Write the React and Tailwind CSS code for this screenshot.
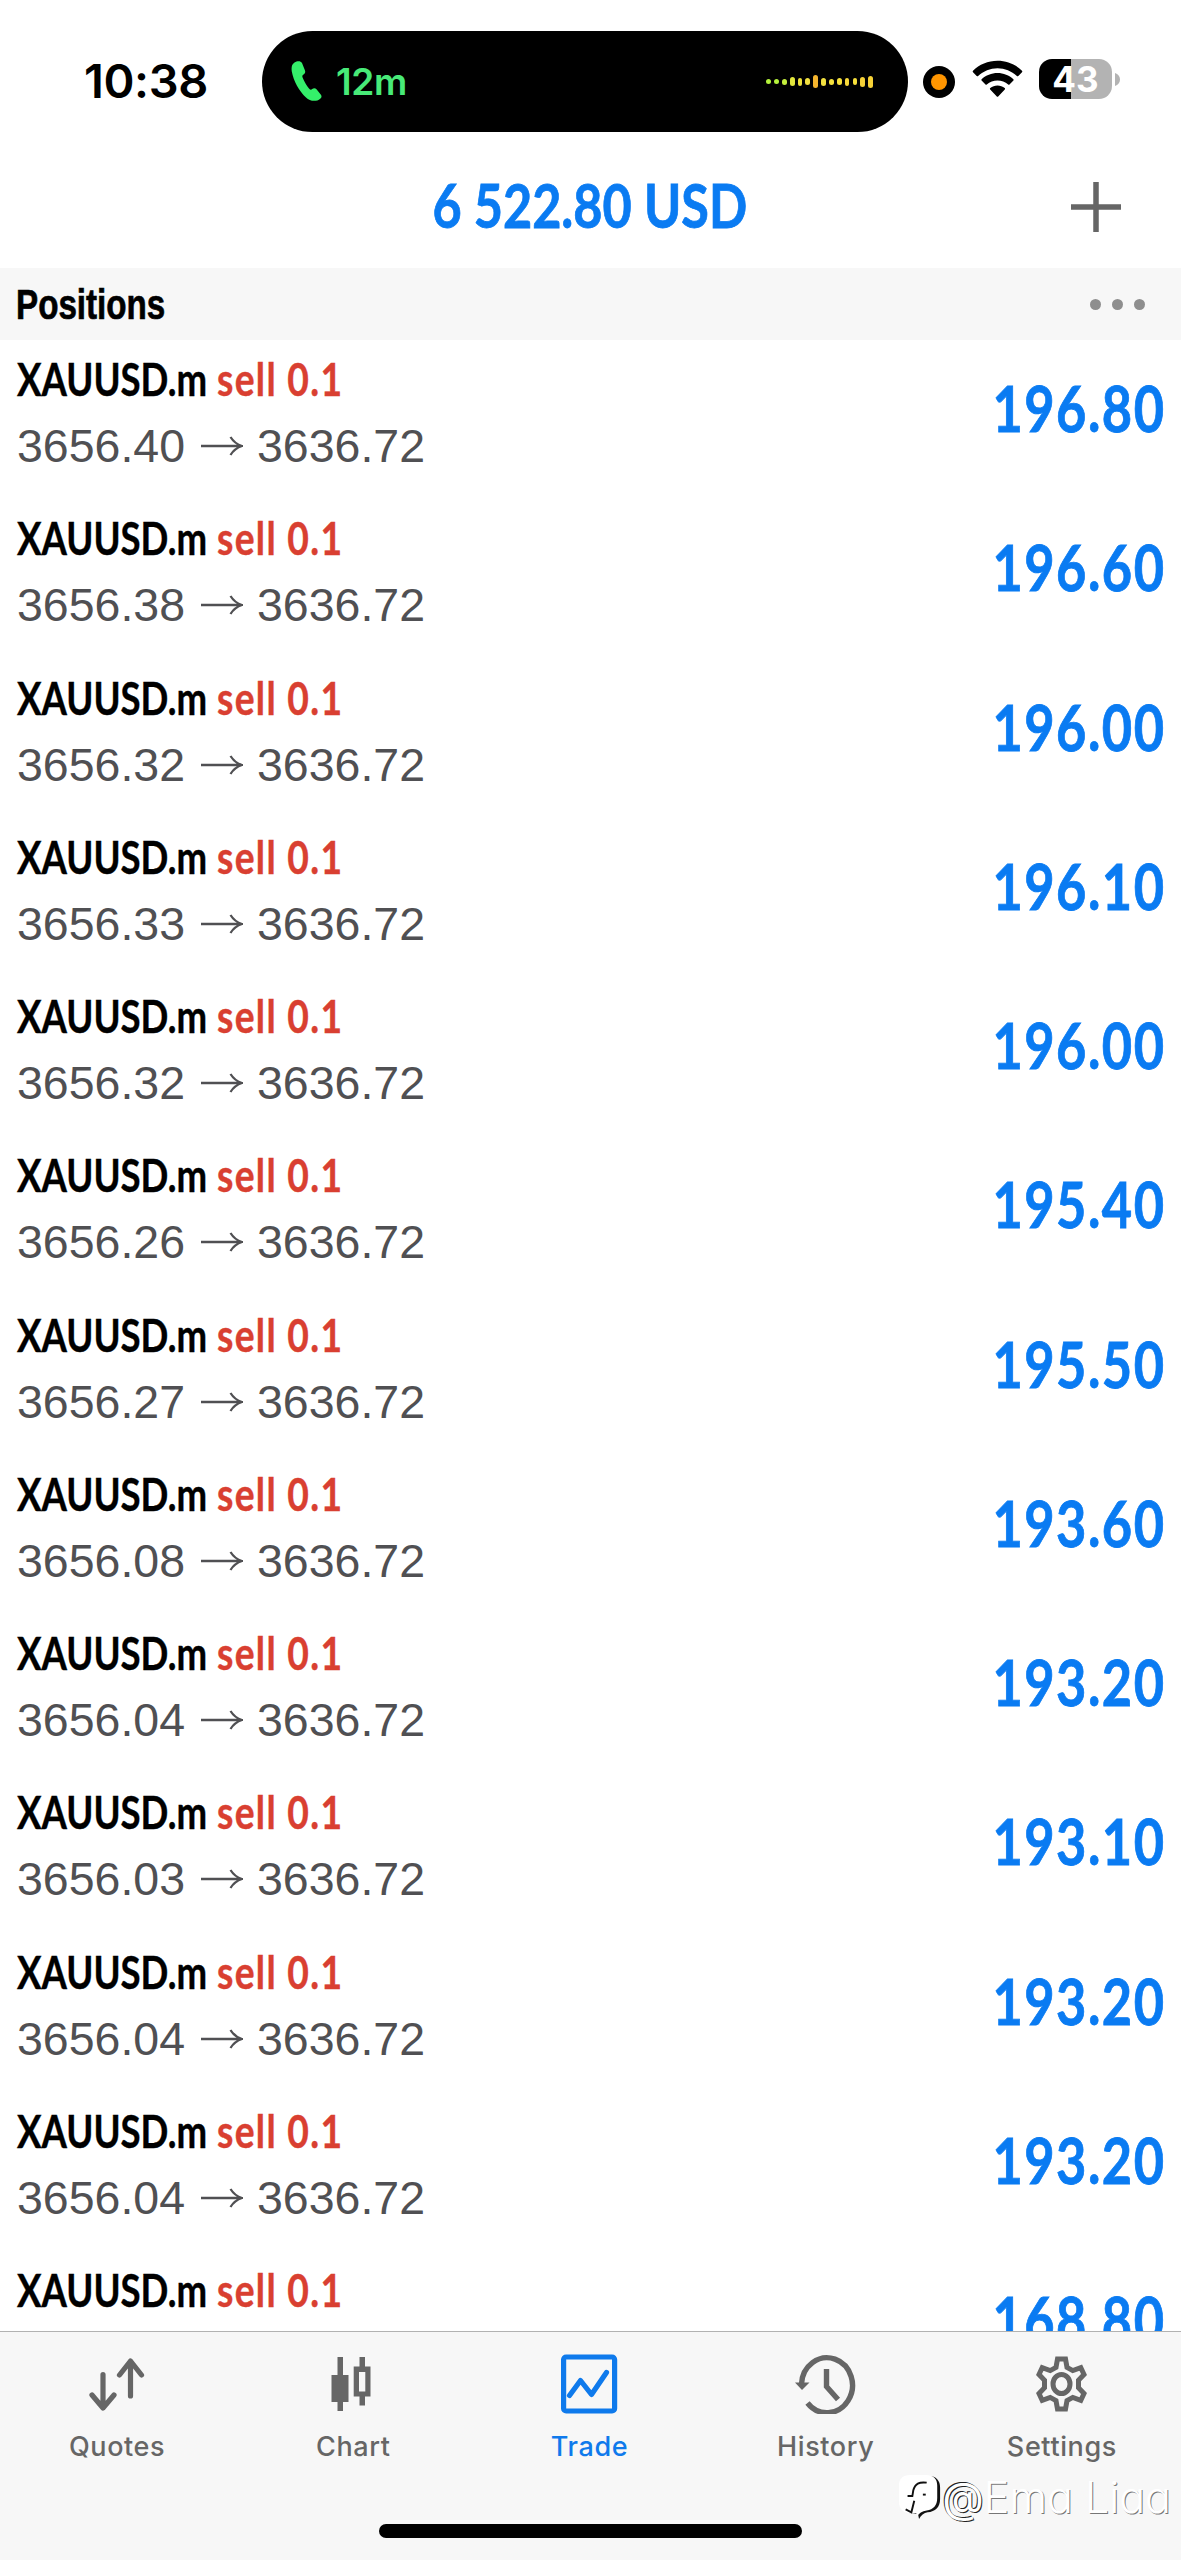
import React from "react";

const positions = [
  ["3656.40", "196.80"],
  ["3656.38", "196.60"],
  ["3656.32", "196.00"],
  ["3656.33", "196.10"],
  ["3656.32", "196.00"],
  ["3656.26", "195.40"],
  ["3656.27", "195.50"],
  ["3656.08", "193.60"],
  ["3656.04", "193.20"],
  ["3656.03", "193.10"],
  ["3656.04", "193.20"],
  ["3656.04", "193.20"],
  [null, "168.80"],
];

const bars = [
  [5, "#b5f23c"], [5, "#b5f23c"], [6, "#c4ee3c"], [9, "#e2e63c"], [8, "#eee23c"],
  [7, "#f2e040"], [13, "#f5b52e"], [8, "#f2e040"], [6, "#f5e23c"], [7, "#f5e03c"],
  [8, "#f7d83a"], [7, "#f7e03a"], [10, "#f5d037"], [12, "#f7d237"],
];

function StatusBar() {
  return (
    <div className="flex h-[163px] items-start">
      <div className="mt-[56px] w-[262px] pl-[84px] font-['Inter'] text-[47px] leading-[50px] font-semibold tracking-[-0.4px]">
        <span>10:38</span>
      </div>
      <div className="mt-[31px] flex h-[101px] w-[646px] items-center rounded-[51px] bg-black">
        <svg className="ml-[29px] h-[41px] w-[31px]" viewBox="0 0 31 41" preserveAspectRatio="none">
          <path d="M3.5 1.5C6 0 9.5-.5 11 2l3 7.500c.6 1.800-.1 3.200-1.500 4-1.200.6-1.500 1.600-.8 3.300 1.500 3.900 3.600 7.500 6.300 10.700 1.300 1.400 2.200 1.500 3.200.5 1.300-1.200 3.200-1.100 4.300.2l4.200 5.300c1.300 1.700 1 3.100-.5 4.200C25.500 41 19 40.500 15 36.500 8.200 30 2.500 20 .8 10.500.2 6.500.8 3.200 3.500 1.500z" fill="#34f06a" />
        </svg>
        <span className="ml-[14px] font-['Inter'] text-[37px] font-semibold tracking-[-0.3px] text-[#48ea78]">12m</span>
        <div className="mr-[35px] ml-auto flex items-center gap-[3.050px]">
          {bars.map(([h, c], i) => (
            <span key={i} className="w-[4.800px] rounded-full" style={{ height: h, background: c }} />
          ))}
        </div>
      </div>
      <div className="mt-[66px] ml-[15px] flex size-[32px] items-center justify-center rounded-full bg-black">
        <div className="size-[16px] rounded-full bg-[#ff9500]" />
      </div>
      <svg className="mt-[60px] ml-[17px] h-[38px] w-[51px]" viewBox="0 0 51 38">
        <path d="M25.500.8C35 .8 43.800 4.500 50 10.800c.4.400.4 1 0 1.400l-3.700 3.800c-.4.400-1 .4-1.400 0C39.500 11 32.800 8.200 25.500 8.200S11.500 11 6.100 16c-.4.400-1 .4-1.400 0L1 12.200c-.4-.4-.4-1 0-1.400C7.200 4.500 16 .8 25.500.8z" />
        <path d="M25.500 13c6 0 11.600 2.300 15.900 6.200.4.400.4 1 0 1.400l-3.900 3.800c-.4.400-.9.400-1.300 0-3-2.600-6.700-4-10.700-4s-7.700 1.400-10.700 4c-.4.400-.9.400-1.300 0l-3.900-3.800c-.4-.4-.4-1 0-1.400C13.900 15.300 19.500 13 25.500 13z" />
        <path d="M25.500 25.500c2.700 0 5.200.9 7.200 2.500.5.400.5 1 .1 1.400l-6.600 7c-.4.400-1 .4-1.400 0l-6.600-7c-.4-.4-.4-1 .1-1.400 2-1.600 4.500-2.500 7.200-2.500z" />
      </svg>
      <div className="mt-[59px] ml-[16px] flex h-[40px] w-[73px] items-center justify-center rounded-[13px] bg-[linear-gradient(to_right,#000_44%,#b3b3b3_44%)] font-['Inter'] text-[35px] leading-none font-bold text-white">
        <span>43</span>
      </div>
      <svg className="mt-[73px] ml-[3px] h-[13px] w-[5px]" viewBox="0 0 5 13">
        <path d="M0 0c3 .8 5 3.400 5 6.500S3 12.200 0 13z" fill="#b3b3b3" />
      </svg>
    </div>
  );
}

function Row({ open, profit }) {
  return (
    <div className="flex h-[159.250px] shrink-0 justify-between pr-[16px] pl-[17px]">
      <div className="pt-[11px]">
        <div className="flex h-[56px] font-['Lato'] text-[46px] leading-[56px] font-bold whitespace-nowrap [-webkit-text-stroke:0.4px_currentColor]">
          <span className="w-[200px]"><span className="inline-block origin-left scale-x-[0.795]">XAUUSD.m</span></span>
          <span className="w-[130px] text-[#d93f31]"><span className="inline-block origin-left scale-x-[0.81] tracking-[1.600px]">sell 0.1</span></span>
        </div>
        {open && (
          <div className="mt-[5px] flex h-[56px] items-center pt-[12px] font-['Liberation_Sans'] text-[46.500px] leading-[56px] text-[#505053]">
            <span className="w-[184px]">{open}</span>
            <svg className="mr-[14px] h-[20px] w-[42px]" viewBox="0 0 42 20" fill="none" stroke="#505053" strokeWidth="2.300">
              <path d="M0 10h40M29.500 1C32 5 36 8.500 41 10 36 11.500 32 15 29.500 19" />
            </svg>
            <span>3636.72</span>
          </div>
        )}
      </div>
      <span className="inline-block h-[76px] origin-right scale-x-[0.83] pt-[30px] font-['Lato'] text-[63px] leading-[76px] font-bold tracking-[1.800px] text-[#0a7bf2] [font-kerning:none] [-webkit-text-stroke:0.8px_currentColor]">{profit}</span>
    </div>
  );
}

const icons = {
  Quotes: (
    <g fill="none" stroke="currentColor" strokeWidth="5.200" strokeLinecap="round" strokeLinejoin="round">
      <path d="M16 20.500V52M5 41l11 13 11-13M43.500 42V7M32.500 21L43.500 7l11 14" />
    </g>
  ),
  Chart: (
    <g fill="currentColor">
      <path d="M14.500 3h5.500v18h5.500v27H20v9h-5.500v-9H8.500V21h6z" />
      <path fillRule="evenodd" d="M36.500 3h5.500v9.500h5.500v30H42v9h-5.500v-9h-5.800v-30h5.800zM36 18v19.500h6.300V18z" />
    </g>
  ),
  Trade: (
    <g fill="none" stroke="currentColor" strokeWidth="5.200" strokeLinecap="round" strokeLinejoin="round">
      <rect x="4.600" y="3" width="51" height="54" rx="2.500" />
      <path d="M10.500 41.500L21.500 26.500l11 14L47.500 18.500" />
    </g>
  ),
  History: (
    <g fill="none" stroke="currentColor" strokeWidth="5.400">
      <path d="M6.500 30A25.500 27.500 0 1 1 12.500 49" />
      <path d="M31.500 15v17.500l11.500 13" />
      <path d="M0 28.500h14.500L7 36z" fill="currentColor" stroke="none" />
    </g>
  ),
  Settings: (
    <g fill="none" stroke="currentColor" strokeWidth="5">
      <path strokeLinejoin="miter" d="M26.500 5h8l1.500 8.300 5.800 3.300 8-3 3.200 6.900-5.500 5.800v7.400l5.500 5.800-3.200 6.900-8-3-5.800 3.300-1.500 8.300h-8L25 46.700l-5.800-3.300-8 3L8 39.500l5.500-5.800v-7.400L8 20.500l3.200-6.900 8 3 5.800-3.300z" />
      <ellipse cx="30.500" cy="30" rx="8.500" ry="9.500" />
    </g>
  ),
};

function TabBar() {
  return (
    <div className="relative h-[229px] border-t border-[#b2b2b2] bg-[#f7f7f7]">
      <div className="grid grid-cols-5 pt-[22px]">
        {Object.keys(icons).map((name) => (
          <div key={name} className={"flex flex-col items-center pr-[2px] " + (name === "Trade" ? "text-[#0f7aec]" : "text-[#666666]")}>
            <svg className="h-[60px] w-[61px]" viewBox="0 0 61 60">{icons[name]}</svg>
            <span className="mt-[15px] font-['Inter'] text-[27px] leading-[36px] font-medium tracking-[0.600px]">{name}</span>
          </div>
        ))}
      </div>
      <div className="mx-auto mt-[59px] h-[14px] w-[423px] rounded-full bg-black" />
      <div className="absolute top-[140px] right-[10px] flex items-center text-white">
        <svg className="h-[50px] w-[44px]" viewBox="0 0 46 50">
          <path d="M14 3h18c8 0 12 5 12 12v12c0 9-5 13-13 14-4 .7-7 3-9 7l-1-5c-2 0-5-1-7-1C7 42 3 37 3 30V14C3 7 7 3 14 3z" fill="#111" />
          <path d="M13 2h16c8 0 12 4 12 11v13c0 8-4 12-11 13-5 .7-8 3-10 6l-1-3-5 .5C6 42 1 38 1 30V13C1 6 5 2 13 2z" fill="#fff" />
          <path d="M30 10c-8-1-12 1-14 8l-1 6h-5M17 29l-3 12-6-3" fill="none" stroke="#111" strokeWidth="2" />
          <path d="M26 22.500h3" stroke="#111" strokeWidth="2" />
        </svg>
        <span className="font-['Inter'] text-[43px] leading-[50px] font-normal [text-shadow:-1px_-1px_0_#222,1px_1px_0_#222]">@</span>
        <span className="font-['Inter'] text-[43px] leading-[50px] font-light [font-feature-settings:'cv11'] [text-shadow:1px_1px_0_#777]">Ema Liaa</span>
      </div>
    </div>
  );
}

export default function App() {
  return (
    <div className="flex h-[2560px] w-[1181px] flex-col overflow-hidden bg-white text-black">
      <StatusBar />
      <div className="grid h-[105px] grid-cols-[1fr_auto_1fr] items-center">
        <span />
        <span className="mt-[-21px] mr-[2px] inline-block scale-x-[0.825] font-['Lato'] text-[61px] leading-[76px] font-bold whitespace-nowrap text-[#0a7bf2] [-webkit-text-stroke:0.800px_currentColor]">6 522.80 USD</span>
        <svg className="mt-[-18px] mr-[60px] h-[50px] w-[50px] justify-self-end" viewBox="0 0 50 50">
          <path d="M25 0v50M0 25h50" stroke="#666" strokeWidth="5.500" />
        </svg>
      </div>
      <div className="flex h-[72px] items-center justify-between bg-[#f7f7f7] pr-[36px] pl-[16px]">
        <span className="inline-block origin-left scale-x-[0.790] pt-[2px] font-['Liberation_Sans'] text-[42px] leading-[70px] font-bold [-webkit-text-stroke:0.700px_currentColor]">Positions</span>
        <div className="flex gap-[11px]">
          <span className="size-[11px] rounded-full bg-[#8e8e8e]" />
          <span className="size-[11px] rounded-full bg-[#8e8e8e]" />
          <span className="size-[11px] rounded-full bg-[#8e8e8e]" />
        </div>
      </div>
      <div className="flex min-h-0 flex-1 flex-col overflow-hidden">
        {positions.map(([open, profit], i) => (
          <Row key={i} open={open} profit={profit} />
        ))}
      </div>
      <TabBar />
    </div>
  );
}
